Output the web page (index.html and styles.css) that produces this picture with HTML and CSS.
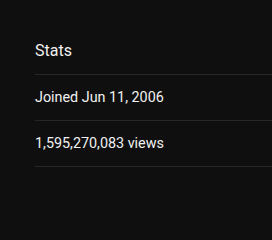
FILE: index.html
```html
<!DOCTYPE html>
<html lang="en">
<head>
    <meta charset="UTF-8">
    <meta name="viewport" content="width=device-width, initial-scale=1.0">
    <title>Stats</title>
    <link rel="stylesheet" href="styles.css">
</head>
<body>
    <section class="stats">
        <h2 class="stats-title">Stats</h2>
        <div class="stat-row">Joined Jun 11, 2006</div>
        <div class="stat-row">1,595,270,083 views</div>
    </section>
</body>
</html>
```
FILE: styles.css
```css
:root {
    --fundo: #0f0f0f;
    --texto: #f1f1f1;
    --linha: #272727;
}

body {
    margin: 0;
    background-color: var(--fundo);
    color: var(--texto);
    font-family: Roboto, 'Noto Sans', sans-serif;
    min-height: 100vh;
}

.stats {
    padding: 40px 0 0 35px;
}

.stats-title {
    margin: 0;
    padding-bottom: 12px;
    font-size: 16px;
    line-height: 22px;
    font-weight: 400;
    border-bottom: 1px solid var(--linha);
}

.stat-row {
    padding: 12px 0;
    font-size: 14.35px;
    line-height: 21px;
    border-bottom: 1px solid var(--linha);
}
```
